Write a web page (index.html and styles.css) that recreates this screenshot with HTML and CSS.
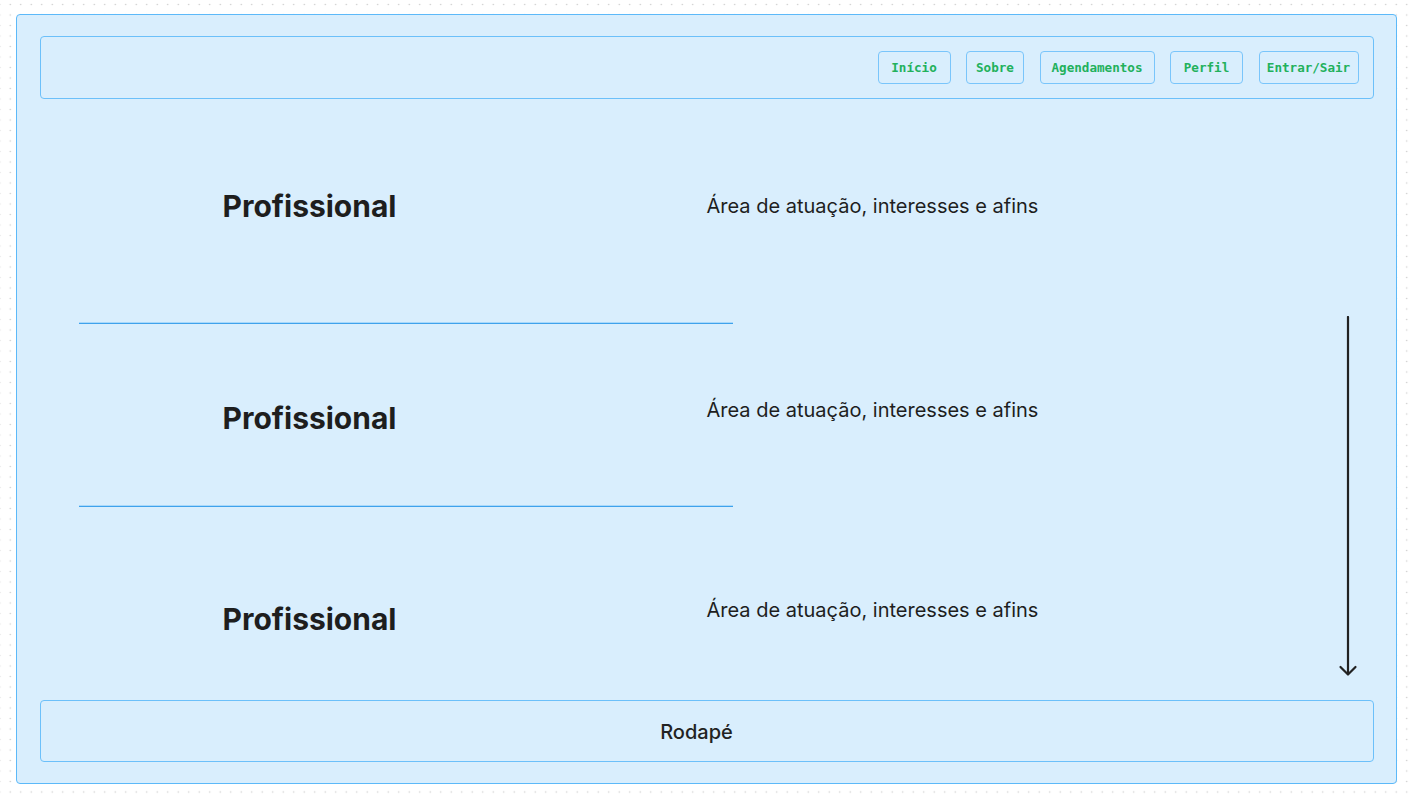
FILE: index.html
```html
<!DOCTYPE html>
<html lang="pt">
<head>
<meta charset="utf-8">
<title>Profissionais</title>
<link rel="stylesheet" href="styles.css">
</head>
<body>
<div class="frame">
  <header class="header">
    <nav class="nav">
      <a class="btn btn-inicio">Início</a>
      <a class="btn btn-sobre">Sobre</a>
      <a class="btn btn-agenda">Agendamentos</a>
      <a class="btn btn-perfil">Perfil</a>
      <a class="btn btn-entrar">Entrar/Sair</a>
    </nav>
  </header>
  <main class="main">
    <div class="list">
      <section class="item item-1">
        <h2 class="title">Profissional</h2>
        <p class="desc">Área de atuação, interesses e afins</p>
      </section>
      <div class="divider"></div>
      <section class="item item-2">
        <h2 class="title">Profissional</h2>
        <p class="desc">Área de atuação, interesses e afins</p>
      </section>
      <div class="divider"></div>
      <section class="item item-3">
        <h2 class="title">Profissional</h2>
        <p class="desc">Área de atuação, interesses e afins</p>
      </section>
    </div>
    <div class="scroll">
      <svg class="arrow" width="20" height="362" viewBox="0 0 20 362" fill="none" stroke="#222" stroke-width="2.2" stroke-linecap="round" stroke-linejoin="round">
        <line x1="10" y1="1" x2="10" y2="358"/>
        <polyline points="2.5,351 10,358.5 17.5,351"/>
      </svg>
    </div>
  </main>
  <footer class="footer"><span class="footer-text">Rodapé</span></footer>
</div>
</body>
</html>
```

FILE: styles.css
```css
* { box-sizing: border-box; }

html, body {
  margin: 0;
  padding: 0;
}

body {
  width: 1415px;
  height: 800px;
  background-color: #ffffff;
  background-image: radial-gradient(circle, #c9c9c9 0.7px, transparent 1px);
  background-size: 10.5px 10.5px;
  background-position: 5px -0.75px;
  font-family: Inter, "Noto Sans", sans-serif;
  color: #1e1e1e;
  padding: 14px 18px 0 16px;
}

.frame {
  width: 1381px;
  height: 770px;
  background: #d9eefd;
  border: 1.5px solid #5cb9f9;
  border-radius: 4px;
  padding: 20.5px 22.5px 0 22.5px;
  display: flex;
  flex-direction: column;
}

.header {
  height: 63px;
  border: 1px solid #6cc0fa;
  border-radius: 4px;
  display: flex;
  align-items: center;
  justify-content: flex-end;
  padding-right: 14px;
}

.nav {
  display: flex;
  gap: 15.5px;
}

.btn {
  height: 33px;
  border: 1px solid #79c5fb;
  border-radius: 4px;
  display: flex;
  align-items: center;
  justify-content: center;
  font-family: "DejaVu Sans Mono", "Liberation Mono", monospace;
  font-weight: bold;
  font-size: 12.6px;
  color: #22b15c;
  text-decoration: none;
}

.btn-inicio { width: 73px; }
.btn-sobre { width: 58px; }
.btn-agenda { width: 115px; }
.btn-perfil { width: 73px; }
.btn-entrar { width: 100px; }

.main {
  height: 601px;
  display: flex;
}

.list {
  width: 1282px;
  padding-left: 39px;
}

.item {
  display: flex;
  align-items: flex-start;
}

.item-1 { height: 224px; padding-top: 89px; }
.item-2 { height: 182px; padding-top: 76px; }
.item-3 { height: 193px; padding-top: 94px; }

.title {
  margin: 0;
  width: 628px;
  padding-left: 144px;
  font-size: 30px;
  line-height: 36px;
  font-weight: 700;
  letter-spacing: 0;
  color: #1e1e1e;
}

.desc {
  margin: 0;
  font-size: 20px;
  line-height: 24px;
  font-weight: 400;
  color: #1e1e1e;
}

.item-1 .desc { margin-top: 6px; }
.item-2 .desc { margin-top: -2px; }
.item-3 .desc { margin-top: -3px; }

.divider {
  width: 654px;
  height: 1px;
  background: #3fa2ec;
  box-shadow: 0 -1px 0 #a9d9fb;
}

.scroll {
  padding-top: 217px;
  padding-left: 16px;
}

.arrow { display: block; }

.footer {
  height: 62px;
  border: 1px solid #6cc0fa;
  border-radius: 4px;
  display: flex;
  align-items: center;
  justify-content: center;
  padding: 2px 20px 0 0;
  font-family: Inter, "Noto Sans", sans-serif;
  font-weight: 500;
  font-size: 20px;
  color: #222;
}
```
